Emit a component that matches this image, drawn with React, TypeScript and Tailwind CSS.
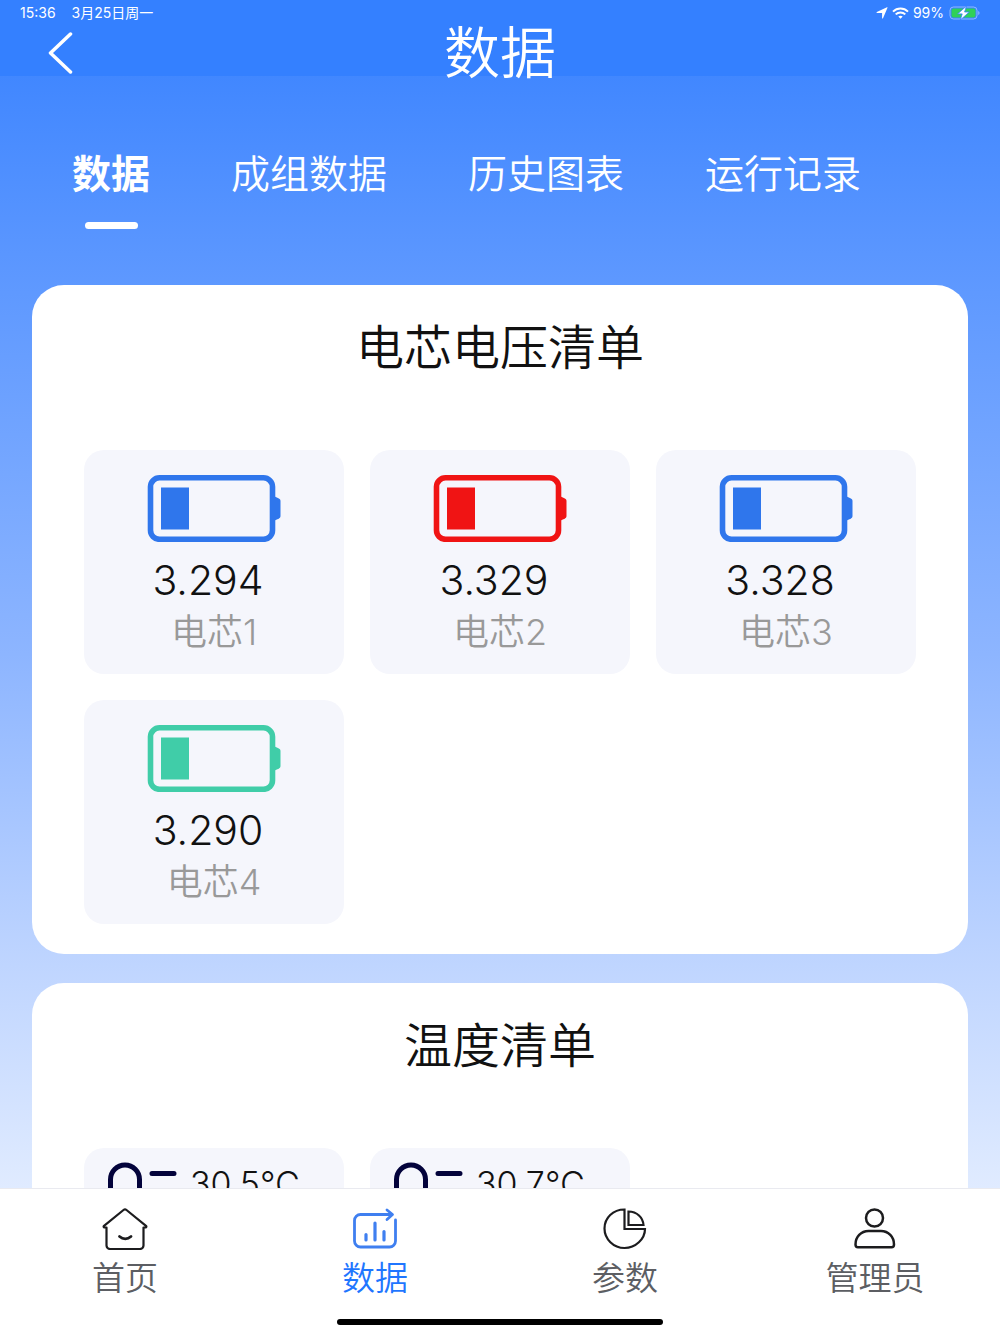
import { type ReactNode } from 'react'

interface Cell {
  name: string
  voltage: string
  tone: string
}

const tabs = ['数据', '成组数据', '历史图表', '运行记录']

const cells: Cell[] = [
  { name: '电芯1', voltage: '3.294', tone: 'text-[#2f76ec]' },
  { name: '电芯2', voltage: '3.329', tone: 'text-[#f01414]' },
  { name: '电芯3', voltage: '3.328', tone: 'text-[#2f76ec]' },
  { name: '电芯4', voltage: '3.290', tone: 'text-[#40cda8]' },
]

const temperatures = ['30.5℃', '30.7℃']

function StatusBar() {
  return (
    <div className="flex h-7 items-center justify-between px-5 pb-0.5 text-[14px] leading-none font-normal">
      <div className="flex gap-4">
        <span>15:36</span>
        <span>3月25日周一</span>
      </div>
      <div className="flex items-center gap-1">
        <svg viewBox="0 0 12 12" className="h-3 w-3" fill="currentColor">
          <path d="M11.6.6 7 11.2c-.2.5-.9.4-.9-.2V6H1C.4 6 .3 5.200.8 5L11 .2c.4-.2.8.1.6.4z" />
        </svg>
        <svg viewBox="0 0 17 12" className="h-3 w-[17px]" fill="none" stroke="currentColor" strokeWidth="2">
          <path d="M1 4.600c4.200-4.100 10.800-4.100 15 0M3.700 7.400c2.700-2.600 6.900-2.600 9.600 0" />
          <path d="M8.500 11.800 6.300 9.600c1.200-1.100 3.200-1.100 4.400 0z" fill="currentColor" stroke="none" />
        </svg>
        <span>99%</span>
        <svg viewBox="0 0 32 14" className="h-[14px] w-8">
          <rect x="2" y="1" width="27" height="12" rx="3.500" fill="none" stroke="#fff" strokeOpacity=".45" />
          <rect x="3.500" y="2.500" width="24" height="9" rx="2" fill="#30d158" />
          <path d="M30.300 5v4c1.600-.6 1.600-3.400 0-4z" fill="#fff" fillOpacity=".5" />
          <path d="M18.500 0 9.600 7.900h4.600L12.300 14l9-8h-4.700z" fill="#fff" stroke="#3480ff" strokeWidth=".8" />
        </svg>
      </div>
    </div>
  )
}

function BatteryIcon({ className = '' }: { className?: string }) {
  return (
    <svg viewBox="0 0 134 67" className={`h-[67px] w-[134px] ${className}`}>
      <rect x="3.500" y="2.800" width="122" height="61.500" rx="9" fill="none" stroke="currentColor" strokeWidth="5.600" />
      <path d="M127 21c3 2 6.500 2 6.500 5v15c0 3-3.500 3-6.500 5z" fill="currentColor" />
      <rect x="14" y="12.500" width="28" height="42" fill="currentColor" />
    </svg>
  )
}

function ThermometerIcon() {
  return (
    <svg
      viewBox="0 0 70 84"
      className="h-[84px] w-[70px] shrink-0 text-[#03033b]"
      fill="none"
      stroke="currentColor"
      strokeWidth="5"
      strokeLinecap="round"
    >
      <path d="M2.500 50V17.500a14.500 14.500 0 0 1 29 0V50a18 18 0 1 1-29 0z" />
      <path d="M44 11.500h22M44 30h14M44 48h22" />
    </svg>
  )
}

function HomeIcon() {
  return (
    <svg viewBox="0 0 46 42" className="h-[42px] w-[46px]" fill="none" stroke="#1c1c1e" strokeWidth="2.200" strokeLinecap="round" strokeLinejoin="round">
      <path d="M4.500 19.500H2.600c-1-.2-1.300-1-.6-1.700L21.500 2c1-.8 2-.8 3 0L44 17.800c.7.7.4 1.500-.6 1.700h-1.900v18a3.500 3.500 0 0 1-3.500 3.500H8a3.500 3.500 0 0 1-3.500-3.500z" />
      <path d="M17.500 28.500c3.500 3 8 3 11.500 0" strokeWidth="2.800" />
    </svg>
  )
}

function DataIcon() {
  return (
    <svg viewBox="0 0 46 42" className="h-[42px] w-[46px]" fill="none" stroke="#3f7ff0" strokeWidth="2.800" strokeLinecap="round" strokeLinejoin="round">
      <path d="M39 6.500H8.500a6 6 0 0 0-6 6V33a6 6 0 0 0 6 6h29a6 6 0 0 0 6-6V12" />
      <path d="M35 2 40.500 6.500 35 11.500" />
      <path d="M14 26.500V32M23 15v17M32 23.500V32" strokeWidth="3.200" />
    </svg>
  )
}

function ParamIcon() {
  return (
    <svg viewBox="0 0 46 42" className="h-[42px] w-[46px]" fill="none" stroke="#1c1c1e" strokeWidth="2.200" strokeLinejoin="miter">
      <path d="M22.500 1.500C11 1.500 2.500 10 2.500 20.500S11.500 40 22.500 40 43 31 43 21H22.500z" />
      <path d="M26.500 3.500V17h15C41 9.500 35 3.500 26.500 3.500z" />
    </svg>
  )
}

function UserIcon() {
  return (
    <svg viewBox="0 0 46 42" className="h-[42px] w-[46px]" fill="none" stroke="#1c1c1e" strokeWidth="2.500" strokeLinejoin="round">
      <ellipse cx="22.500" cy="10" rx="8.500" ry="8.500" />
      <path d="M16.500 23h12.500c7.500 0 13 6 13 13.500 0 1.800-.8 2.800-2.500 2.800H6C4.300 39.300 3.500 38.300 3.500 36.500 3.500 29 9 23 16.500 23z" />
    </svg>
  )
}

function Panel({ title, children }: { title: string; children: ReactNode }) {
  return (
    <section className="rounded-[32px] bg-white px-[52px] pt-8 pb-[30px]">
      <h2 className="text-center text-[48px] leading-[62px] text-[#111]">{title}</h2>
      <div className="mt-[71px] grid grid-cols-3 gap-[26px]">{children}</div>
    </section>
  )
}

function NavItem({ label, icon, active = false }: { label: string; icon: ReactNode; active?: boolean }) {
  return (
    <a href="#" className="flex flex-1 flex-col items-center gap-1">
      {icon}
      <span className={`text-[33px] leading-[48px] ${active ? 'text-[#1f76ff]' : 'text-[#5c5e63]'}`}>{label}</span>
    </a>
  )
}

export default function App() {
  return (
    <div className="flex h-dvh flex-col font-['Inter','Noto_Sans_CJK_SC',sans-serif] font-[350]">
      <header className="relative z-10 bg-[#3480ff] text-white">
        <StatusBar />
        <div className="grid h-12 grid-cols-[1fr_auto_1fr] items-center px-12">
          <button type="button" aria-label="返回" className="justify-self-start">
            <svg viewBox="0 0 26 42" className="h-[42px] w-[26px]" fill="none" stroke="currentColor" strokeWidth="3.500" strokeLinecap="round" strokeLinejoin="round">
              <path d="M22.500 2 2.500 21l20 19" />
            </svg>
          </button>
          <h1 className="text-[56px] leading-[50px]">数据</h1>
        </div>
      </header>

      <main className="min-h-0 flex-1 overflow-y-auto bg-[linear-gradient(#4187ff,#5a96ff_16%,#8db5ff_52%,#bfd5ff_80%,#e0ebff)] [scrollbar-width:none]">
        <div className="flex gap-[81px] px-[72px] pt-[74px] pb-14 text-white">
          {tabs.map((tab, i) => (
            <button key={tab} type="button" className="flex flex-col items-center gap-6">
              <span className={`text-[39px] leading-[48px] whitespace-nowrap ${i === 0 ? 'font-bold' : ''}`}>{tab}</span>
              {i === 0 && <span className="h-[7px] w-[53px] rounded-full bg-white" />}
            </button>
          ))}
        </div>

        <div className="flex flex-col gap-[29px] px-8">
          <Panel title="电芯电压清单">
            {cells.map((cell) => (
              <div key={cell.name} className="flex flex-col items-center rounded-[20px] bg-[#f5f6fc] pt-[25px] pb-[18px]">
                <BatteryIcon className={cell.tone} />
                <p className="mt-3.5 pr-3 text-[41px] leading-[48px] text-[#111]">{cell.voltage}</p>
                <p className="mt-1 text-[36px] leading-[48px] text-[#999]">{cell.name}</p>
              </div>
            ))}
          </Panel>

          <Panel title="温度清单">
            {temperatures.map((value) => (
              <div key={value} className="flex items-start gap-3 rounded-[20px] bg-[#f5f6fc] px-6 pt-3.5 pb-12">
                <ThermometerIcon />
                <p className="text-[34px] leading-[44px] text-[#111]">{value}</p>
              </div>
            ))}
          </Panel>
        </div>
      </main>

      <footer className="border-t border-[#e9eaf0] bg-white pt-[19px] pb-[9px]">
        <nav className="flex">
          <NavItem label="首页" icon={<HomeIcon />} />
          <NavItem label="数据" icon={<DataIcon />} active />
          <NavItem label="参数" icon={<ParamIcon />} />
          <NavItem label="管理员" icon={<UserIcon />} />
        </nav>
        <div className="mx-auto mt-[17px] h-[6px] w-[326px] rounded-full bg-black" />
      </footer>
    </div>
  )
}
